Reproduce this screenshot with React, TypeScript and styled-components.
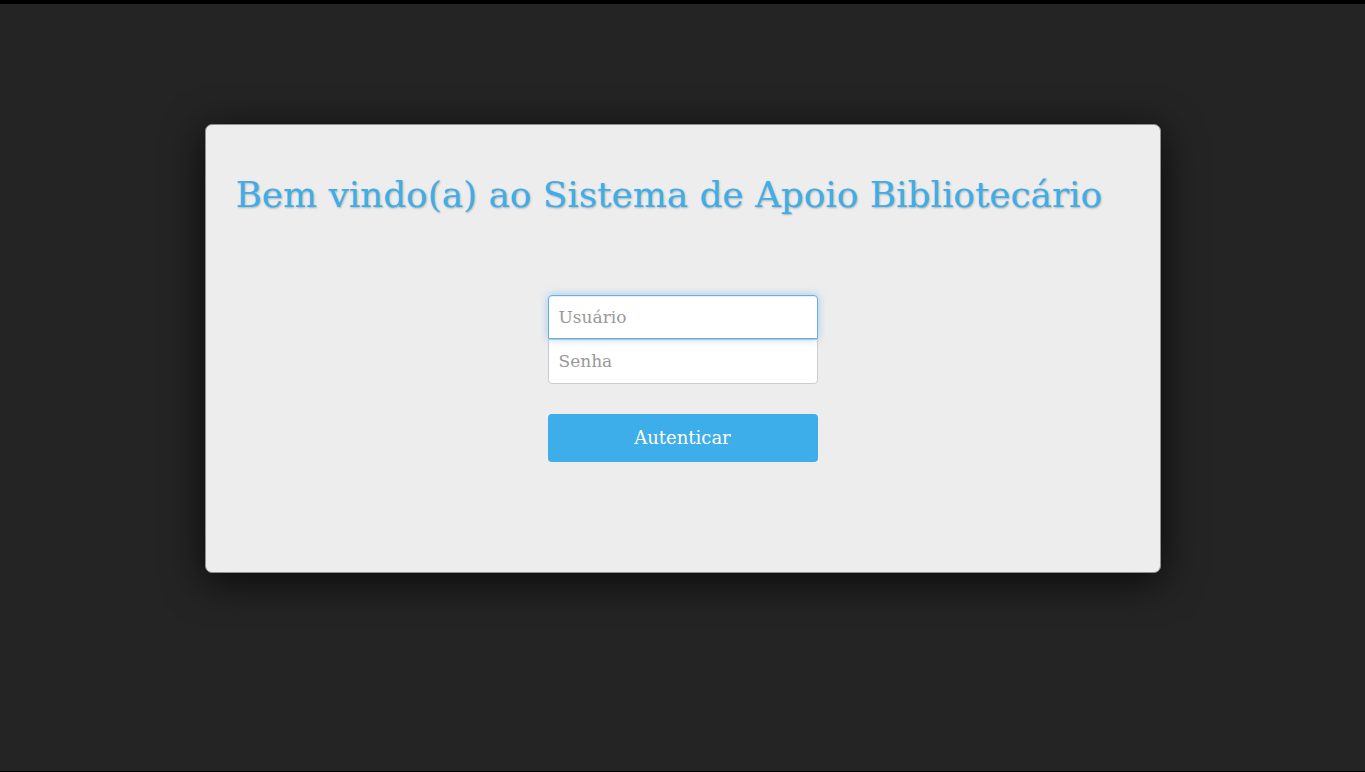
import React from "react";
import styled, { createGlobalStyle, css } from "styled-components";

const Global = createGlobalStyle`
  html { background: #000; }
  body {
    margin: 0;
    background: #000;
    font-family: "DejaVu Serif", serif;
  }
  * { box-sizing: border-box; }
`;

const Page = styled.div`
  margin-top: 4px;
  height: 767px;
  background: #242424;
  padding-top: 120px;
`;

const Card = styled.div`
  width: 956px;
  height: 449px;
  margin: 0 auto;
  background: #ededed;
  border: 1px solid #8f8f8f;
  border-radius: 7px;
  box-shadow: 0 8px 40px rgba(0, 0, 0, 0.75);
  padding: 44px 30px 30px;
  display: flex;
  flex-direction: column;
  align-items: stretch;
`;

const Title = styled.h2`
  margin: 0;
  font-family: "DejaVu Serif", serif;
  font-weight: normal;
  font-size: 35.85px;
  line-height: 52px;
  color: #3daee9;
  text-shadow: 1px 1px 2px rgba(0, 0, 0, 0.25);
`;

const Form = styled.form`
  width: 270px;
  margin: 74px auto 0;
  display: flex;
  flex-direction: column;
`;

const Input = styled.input<{ $position: "top" | "bottom"; $focused?: boolean }>`
  height: 44px;
  width: 100%;
  padding: 0 10px;
  font-family: "DejaVu Serif", serif;
  font-size: 17px;
  color: #555;
  background: #fff;
  border: 1px solid #ccc;
  outline: none;
  margin: 0;
  ${(p) =>
    p.$position === "top"
      ? css`
          border-radius: 4px 4px 0 0;
        `
      : css`
          border-radius: 0 0 4px 4px;
          height: 45px;
          padding-bottom: 2px;
        `}
  ${(p) =>
    p.$focused &&
    css`
      position: relative;
      z-index: 1;
      border-color: #66afe9;
      box-shadow: inset 0 1px 1px rgba(0, 0, 0, 0.075), 0 0 8px rgba(102, 175, 233, 0.6);
    `}
  &::placeholder {
    color: #999;
  }
`;

const Button = styled.button`
  margin-top: 30px;
  height: 48px;
  width: 100%;
  padding: 0 0 2px;
  border: none;
  border-radius: 4px;
  background: #3daee9;
  color: #fff;
  font-family: "DejaVu Serif", serif;
  font-size: 18px;
  cursor: pointer;
`;

export default function App() {
  return (
    <>
      <Global />
      <Page>
        <Card>
          <Title>Bem vindo(a) ao Sistema de Apoio Bibliotecário</Title>
          <Form onSubmit={(e) => e.preventDefault()}>
            <Input $position="top" $focused placeholder="Usuário" autoFocus />
            <Input $position="bottom" type="password" placeholder="Senha" />
            <Button type="submit">Autenticar</Button>
          </Form>
        </Card>
      </Page>
    </>
  );
}
